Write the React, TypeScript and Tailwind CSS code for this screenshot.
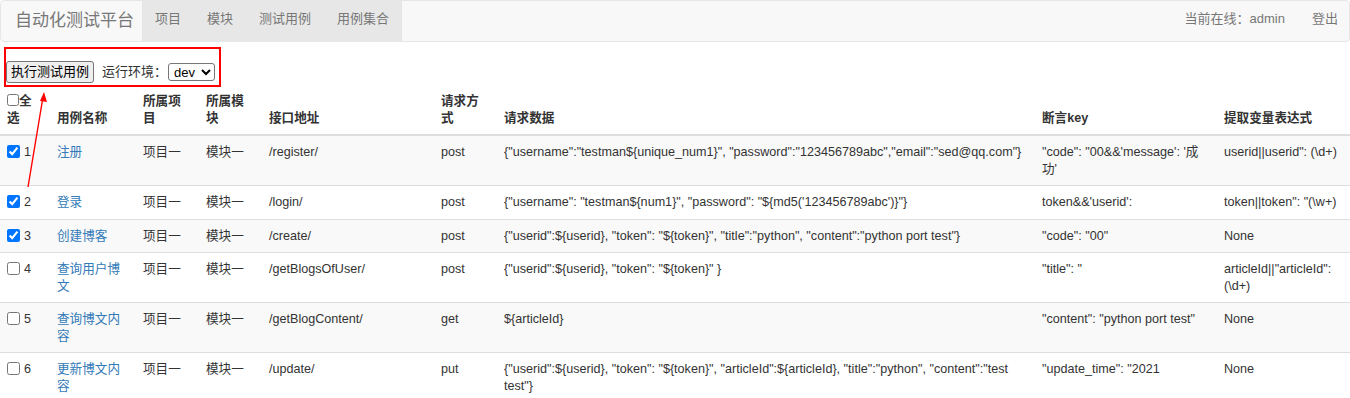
import React from 'react';

type Row = {
  id: number;
  checked: boolean;
  name: string;
  project: string;
  module: string;
  url: string;
  method: string;
  data: string;
  assert: string;
  extract: string;
};

const rows: Row[] = [
  {
    id: 1,
    checked: true,
    name: '注册',
    project: '项目一',
    module: '模块一',
    url: '/register/',
    method: 'post',
    data: '{"username":"testman${unique_num1}", "password":"123456789abc","email":"sed@qq.com"}',
    assert: `"code": "00&&'message': '成功'`,
    extract: 'userid||userid": (\\d+)',
  },
  {
    id: 2,
    checked: true,
    name: '登录',
    project: '项目一',
    module: '模块一',
    url: '/login/',
    method: 'post',
    data: `{"username": "testman\${num1}", "password": "\${md5('123456789abc')}"}`,
    assert: "token&&'userid':",
    extract: 'token||token": "(\\w+)',
  },
  {
    id: 3,
    checked: true,
    name: '创建博客',
    project: '项目一',
    module: '模块一',
    url: '/create/',
    method: 'post',
    data: '{"userid":${userid}, "token": "${token}", "title":"python", "content":"python port test"}',
    assert: '"code": "00"',
    extract: 'None',
  },
  {
    id: 4,
    checked: false,
    name: '查询用户博文',
    project: '项目一',
    module: '模块一',
    url: '/getBlogsOfUser/',
    method: 'post',
    data: '{"userid":${userid}, "token": "${token}" }',
    assert: '"title": "',
    extract: 'articleId||"articleId": (\\d+)',
  },
  {
    id: 5,
    checked: false,
    name: '查询博文内容',
    project: '项目一',
    module: '模块一',
    url: '/getBlogContent/',
    method: 'get',
    data: '${articleId}',
    assert: '"content": "python port test"',
    extract: 'None',
  },
  {
    id: 6,
    checked: false,
    name: '更新博文内容',
    project: '项目一',
    module: '模块一',
    url: '/update/',
    method: 'put',
    data: '{"userid":${userid}, "token": "${token}", "articleId":${articleId}, "title":"python", "content":"test test"}',
    assert: '"update_time": "2021',
    extract: 'None',
  },
];

const font = 'font-["Liberation_Sans","Noto_Sans_CJK_SC",sans-serif]';

function Navbar() {
  return (
    <nav className="flex h-[42px] items-stretch rounded-[4px] border border-[#e7e7e7] bg-[#f8f8f8] text-[#777]">
      <a className="flex items-center pl-[14px] pr-[8px] text-[17px]">自动化测试平台</a>
      <ul className="flex items-stretch bg-[#e7e7e7] text-[13px]">
        {['项目', '模块', '测试用例', '用例集合'].map((t) => (
          <li key={t} className="flex items-center px-[13px] pb-[4px]">
            {t}
          </li>
        ))}
      </ul>
      <div className="ml-auto flex items-center gap-[27px] pb-[4px] pr-[11px] text-[13px]">
        <span>当前在线：admin</span>
        <span>登出</span>
      </div>
    </nav>
  );
}

function Toolbar() {
  return (
    <div className="flex h-[22px] items-center pl-[6px] text-[13px] text-[#333]">
      <button className="h-[22px] rounded-[3px] border border-[#767676] bg-[#efefef] px-[4px] text-[13px] text-black">
        执行测试用例
      </button>
      <span className="ml-[8px]">运行环境：</span>
      <select className="ml-[1px] h-[18px] w-[47px] rounded-[3px] border border-[#767676] bg-white pl-[1px] text-[13px] leading-none text-black">
        <option>dev</option>
      </select>
    </div>
  );
}

const th = 'px-[8px] pb-[8px] pt-[8px] text-left align-bottom font-bold';
const td = 'px-[8px] py-[8px] align-top';

function CaseTable() {
  return (
    <table className="mt-[2px] w-full table-fixed border-collapse text-[12.6px] leading-[16.5px] text-[#333]">
      <colgroup>
        <col className="w-[49px]" />
        <col className="w-[86px]" />
        <col className="w-[63px]" />
        <col className="w-[63px]" />
        <col className="w-[172px]" />
        <col className="w-[63px]" />
        <col className="w-[538px]" />
        <col className="w-[182px]" />
        <col className="w-[134px]" />
      </colgroup>
      <thead>
        <tr className="border-b-2 border-[#ddd]">
          <th className="px-[7px] pb-[8px] pt-[8px] text-left align-bottom font-bold">
            <input type="checkbox" className="m-0 h-[12px] w-[12px] align-[-1px]" />
            全选
          </th>
          <th className={th}>用例名称</th>
          <th className={th}>所属项目</th>
          <th className={th}>所属模块</th>
          <th className={th}>接口地址</th>
          <th className={th}>请求方式</th>
          <th className={th}>请求数据</th>
          <th className={th}>断言key</th>
          <th className={th}>提取变量表达式</th>
        </tr>
      </thead>
      <tbody>
        {rows.map((r, i) => (
          <tr key={r.id} className={`border-t border-[#ddd] first:border-t-0 ${i % 2 === 0 ? 'bg-[#f9f9f9]' : 'bg-white'}`}>
            <td className="px-[7px] py-[8px] align-top whitespace-nowrap">
              <input type="checkbox" defaultChecked={r.checked} className="m-0 mr-[4px] h-[13px] w-[13px] align-[-2px]" />
              {r.id}
            </td>
            <td className={td}>
              <a className="text-[#337ab7]">{r.name}</a>
            </td>
            <td className={td}>{r.project}</td>
            <td className={td}>{r.module}</td>
            <td className={td}>{r.url}</td>
            <td className={td}>{r.method}</td>
            <td className={td}>{r.data}</td>
            <td className={td}>{r.assert}</td>
            <td className={td}>{r.extract}</td>
          </tr>
        ))}
      </tbody>
    </table>
  );
}

function Annotation() {
  return (
    <>
      <div className="pointer-events-none absolute left-[4px] top-[47px] h-[40px] w-[217px] border-2 border-[#ff0000]" />
      <svg className="pointer-events-none absolute left-0 top-0" width="80" height="200" viewBox="0 0 80 200">
        <line x1="28" y1="187" x2="42.5" y2="100" stroke="#ff0000" strokeWidth="1.4" />
        <polygon points="44,92 40,101 47,102" fill="#ff0000" />
      </svg>
    </>
  );
}

export default function App() {
  return (
    <div className={`relative min-h-[398px] bg-white ${font}`}>
      <Navbar />
      <div className="pt-[19px]">
        <Toolbar />
      </div>
      <CaseTable />
      <Annotation />
    </div>
  );
}
